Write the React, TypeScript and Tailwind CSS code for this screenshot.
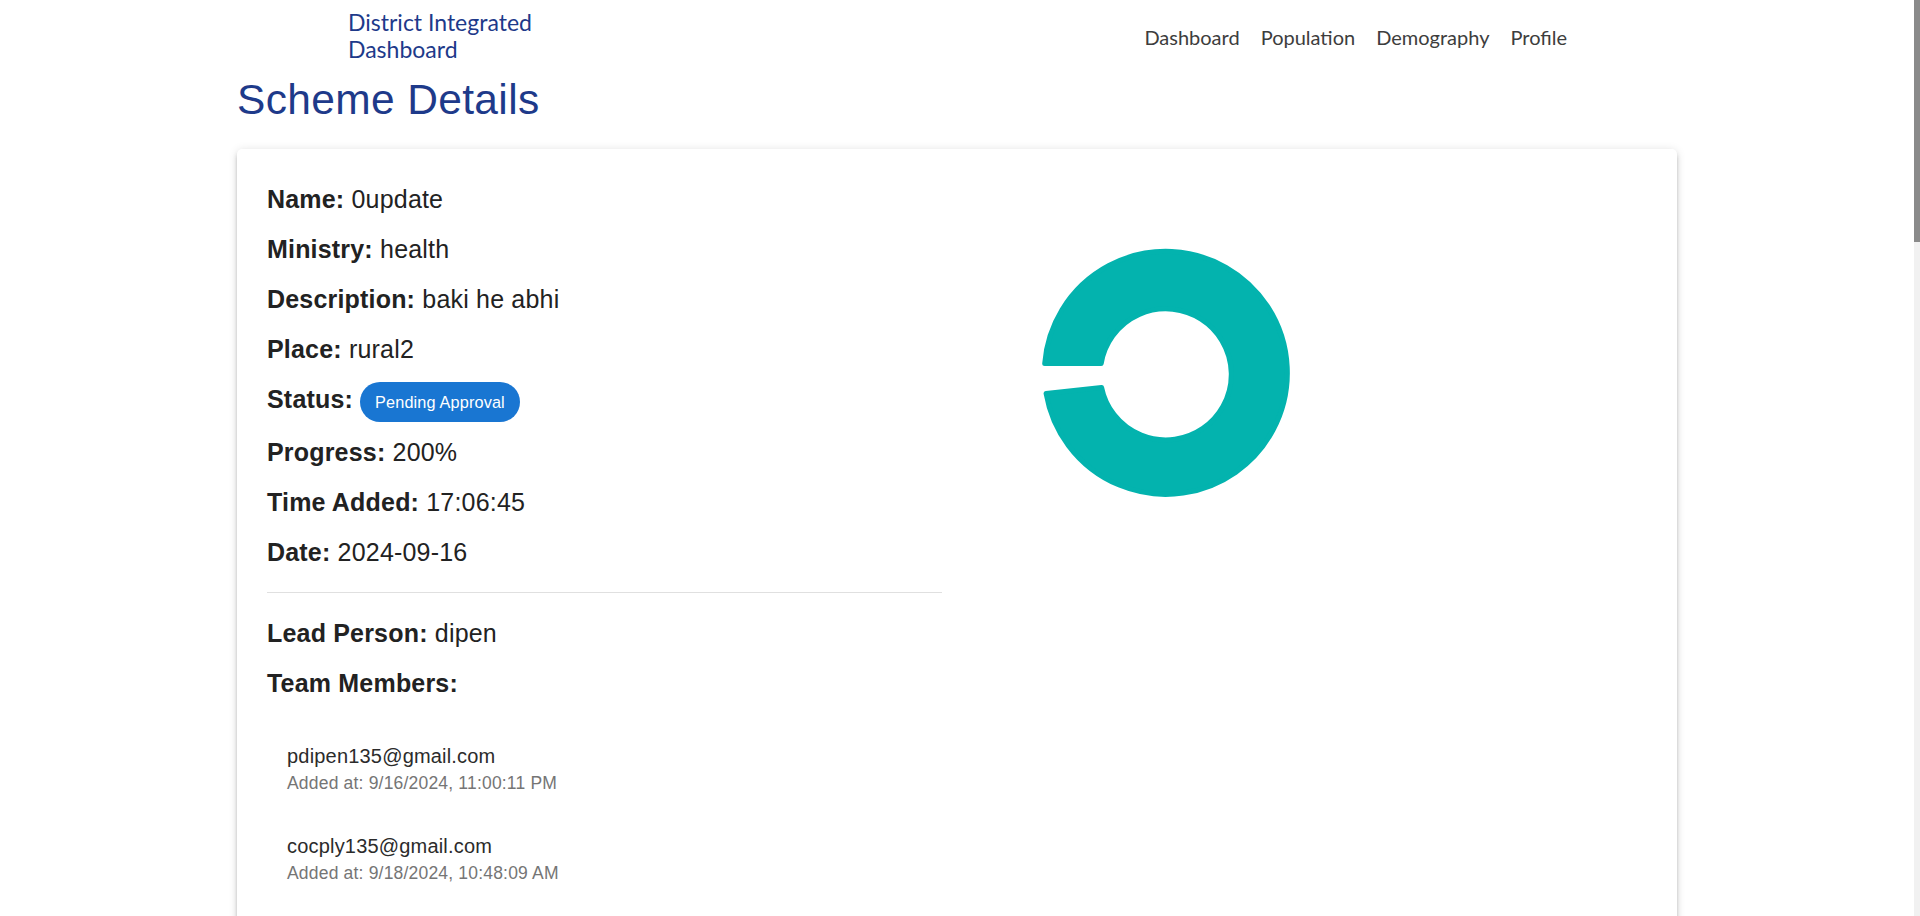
import React from "react";

const details = [
  { label: "Name:", value: "0update" },
  { label: "Ministry:", value: "health" },
  { label: "Description:", value: "baki he abhi" },
  { label: "Place:", value: "rural2" },
];

const moreDetails = [
  { label: "Progress:", value: "200%" },
  { label: "Time Added:", value: "17:06:45" },
  { label: "Date:", value: "2024-09-16" },
];

const members = [
  { email: "pdipen135@gmail.com", added: "9/16/2024, 11:00:11 PM" },
  { email: "cocply135@gmail.com", added: "9/18/2024, 10:48:09 AM" },
];

function Row({ label, value, last }: { label: string; value: string; last?: boolean }) {
  return (
    <div className={`text-[25px] leading-[40px] tracking-[0.19px] text-[#222222] ${last ? "" : "mb-[10px]"}`}>
      <span className="font-bold">{label}</span> {value}
    </div>
  );
}

function ProgressRing() {
  // single arc with a small gap on the left, rounded corners via a thick round-joined stroke
  return (
    <svg width="418" height="388" viewBox="-209 -194 418 388">
      <path
        d="M -121.3 -9.5 A 121.5 121.5 0 1 1 -119.9 20.5 L -64.4 14.4 A 65.5 65.5 0 1 0 -64.8 -9.5 Z"
        fill="#03b3ae"
        stroke="#03b3ae"
        strokeWidth="5"
        strokeLinejoin="round"
      />
    </svg>
  );
}

export default function App() {
  return (
    <div className="flex h-[916px] overflow-hidden bg-white font-['Liberation_Sans',Arial,sans-serif]">
      <main className="flex-1 min-w-0">
        <div className="mx-auto max-w-[1500px] px-[30px]">
          {/* Header */}
          <header className="flex justify-between items-start h-[64px] pl-[111px] pr-[110px] font-['Lato',sans-serif]">
            <div className="pt-[9px] w-[200px] text-[23px] leading-[27px] text-[#1e3a8a]">
              District Integrated Dashboard
            </div>
            <nav className="flex gap-[21px] pt-[25px] text-[20px] leading-[24px] text-[#3d3d3d]">
              <a href="#">Dashboard</a>
              <a href="#">Population</a>
              <a href="#">Demography</a>
              <a href="#">Profile</a>
            </nav>
          </header>

          <h1 className="mt-[10px] text-[42.5px] leading-[52px] tracking-[0.35px] text-[#1e3a8a]">Scheme Details</h1>

          {/* Details card */}
          <section className="mt-[23px] min-h-[900px] rounded-[5px] bg-white p-[30px] shadow-[0_4px_4px_-2px_rgba(0,0,0,0.2),0_4px_5px_0_rgba(0,0,0,0.14),0_1px_10px_0_rgba(0,0,0,0.12)]">
            <div className="flex">
              <div className="w-[675px]">
                {details.map((d) => (
                  <Row key={d.label} label={d.label} value={d.value} />
                ))}
                <div className="flex items-baseline mb-[10px] text-[25px] leading-[40px] tracking-[0.19px] text-[#222222]">
                  <span className="font-bold">Status:</span>
                  <span className="ml-[7px] inline-flex h-[40px] items-center rounded-full bg-[#1976d2] px-[15px] text-[16.25px] leading-normal tracking-[0.15px] text-white">
                    Pending Approval
                  </span>
                </div>
                {moreDetails.map((d, i) => (
                  <Row key={d.label} label={d.label} value={d.value} last={i === moreDetails.length - 1} />
                ))}

                <hr className="my-[20px] border-0 border-t border-[#e0e0e0]" />

                <Row label="Lead Person:" value="dipen" />
                <div className="text-[25px] leading-[40px] tracking-[0.19px] font-bold text-[#222222]">Team Members:</div>

                <ul>
                  {members.map((m, i) => (
                    <li key={m.email} className={`pl-[20px] ${i === 0 ? "mt-[38px]" : "mt-[35px]"}`}>
                      <div className="text-[20px] leading-[30px] tracking-[0.19px] text-[#2b2b2b]">{m.email}</div>
                      <div className="text-[17.5px] leading-[25px] tracking-[0.19px] text-[#757575]">Added at: {m.added}</div>
                    </li>
                  ))}
                </ul>
              </div>

              <div className="flex-1 pl-[15px]">
                <ProgressRing />
              </div>
            </div>
          </section>
        </div>
      </main>

      {/* scrollbar */}
      <div className="w-[6px] shrink-0 bg-[#f1f1f1]">
        <div className="h-[242px] bg-[#8a8a8a]" />
      </div>
    </div>
  );
}
